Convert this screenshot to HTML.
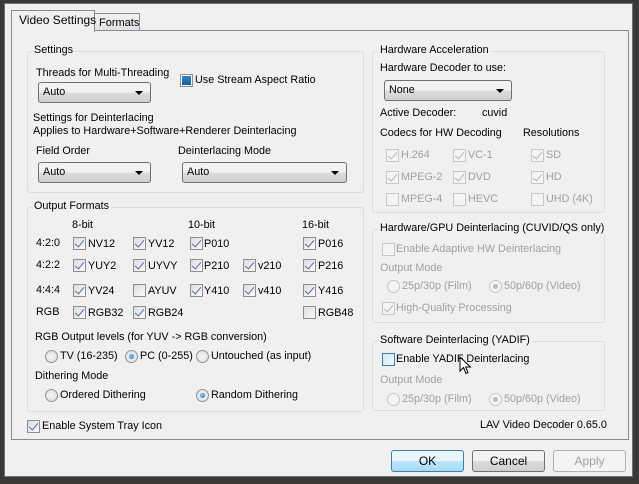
<!DOCTYPE html>
<html><head><meta charset="utf-8"><style>
*{margin:0;padding:0;box-sizing:border-box}
body{width:639px;height:484px;overflow:hidden;background:#3a3836;font-family:"Liberation Sans",sans-serif;font-size:10.8px;color:#000;position:relative}
.a{position:absolute;white-space:nowrap;line-height:13px}
.win{position:absolute;left:4px;top:3px;width:629px;height:474px;background:#f0f0f0;border:1px solid #6f6f6f}
.page{position:absolute;left:11px;top:30px;width:618px;height:410px;background:#f0f0f0;border:1px solid #898c95}
.gb{position:absolute;border:1px solid #d5dfe5;border-radius:3px}
.cap{position:absolute;background:#f0f0f0;padding:0 2px;line-height:13px;white-space:nowrap}
.cb{position:absolute;width:13px;height:13px;border:1px solid #8f8f8f;background:linear-gradient(135deg,#dcdcdc,#fbfbfb)}
.cb.on::after{content:"";position:absolute;left:3px;top:0px;width:4px;height:8px;border:solid #4d6cb0;border-width:0 1.6px 1.6px 0;transform:rotate(40deg)}
.cb.dis{border-color:#c8c8c8;background:#f4f4f4}
.cb.dis.on::after{border-color:#b5b5b5}
.rb{position:absolute;width:13px;height:13px;border:1px solid #949494;border-radius:50%;background:radial-gradient(circle,#f6f6f6,#dadada)}
.rb.on::after{content:"";position:absolute;left:3px;top:3px;width:5px;height:5px;border-radius:50%;background:radial-gradient(circle at 40% 40%,#8ad3ff,#1a5f9c)}
.rb.dis{border-color:#c6c6c6;background:#f4f4f4}
.rb.dis.on::after{background:#bcbcbc}
.g{color:#a0a0a0}
.combo{position:absolute;height:21px;border:1px solid #707070;border-radius:3px;background:linear-gradient(#f2f2f2 50%,#dddddd 50%,#cfcfcf);padding:3px 0 0 4px;line-height:13px}
.combo::after{content:"";position:absolute;right:7px;top:8px;border:4px solid transparent;border-top:4px solid #000;border-bottom:0}
.btn{position:absolute;height:22px;width:73px;border:1px solid #707070;border-radius:3px;background:linear-gradient(#f2f2f2 50%,#dcdcdc 50%,#cfcfcf);text-align:center;line-height:20px;font-size:12px}
</style></head><body>
<div class="win"></div>
<div class="a" style="left:94px;top:13px;width:46px;height:18px;border:1px solid #898c95;border-bottom:0;background:linear-gradient(#f4f4f4,#e0e0e0);padding:3px 0 0 4px;font-size:11px">Formats</div>
<div class="page"></div>
<div class="a" style="left:11px;top:10px;width:84px;height:22px;border:1px solid #898c95;border-bottom:0;background:#f0f0f0;padding:3px 0 0 7px;font-size:12px">Video Settings</div>

<div class="gb" style="left:27px;top:51px;width:337px;height:142px"></div>
<div class="cap" style="left:32px;top:44px">Settings</div>
<div class="a" style="left:36px;top:67px">Threads for Multi-Threading</div>
<div class="combo" style="left:38px;top:82px;width:113px">Auto</div>
<div class="cb" style="left:180px;top:74px;background:#fff"><div style="position:absolute;left:1px;top:1px;width:9px;height:9px;background:linear-gradient(#2a8ad2,#1a5fa6)"></div></div>
<div class="a" style="left:195px;top:74px">Use Stream Aspect Ratio</div>
<div class="a" style="left:33px;top:112px">Settings for Deinterlacing</div>
<div class="a" style="left:33px;top:125px">Applies to Hardware+Software+Renderer Deinterlacing</div>
<div class="a" style="left:36px;top:145px">Field Order</div>
<div class="a" style="left:178px;top:145px">Deinterlacing Mode</div>
<div class="combo" style="left:38px;top:162px;width:113px">Auto</div>
<div class="combo" style="left:182px;top:162px;width:165px">Auto</div>

<div class="gb" style="left:27px;top:207px;width:337px;height:205px"></div>
<div class="cap" style="left:32px;top:200px">Output Formats</div>
<div class="a" style="left:72px;top:219px">8-bit</div>
<div class="a" style="left:188px;top:219px">10-bit</div>
<div class="a" style="left:302px;top:219px">16-bit</div>

<div class="a" style="left:36px;top:237px">4:2:0</div>
<div class="cb on" style="left:73px;top:237px"></div><div class="a" style="left:88px;top:238px">NV12</div>
<div class="cb on" style="left:133px;top:237px"></div><div class="a" style="left:148px;top:238px">YV12</div>
<div class="cb on" style="left:190px;top:237px"></div><div class="a" style="left:204px;top:238px">P010</div>
<div class="cb on" style="left:303px;top:237px"></div><div class="a" style="left:318px;top:238px">P016</div>

<div class="a" style="left:36px;top:259px">4:2:2</div>
<div class="cb on" style="left:73px;top:259px"></div><div class="a" style="left:88px;top:260px">YUY2</div>
<div class="cb on" style="left:133px;top:259px"></div><div class="a" style="left:148px;top:260px">UYVY</div>
<div class="cb on" style="left:190px;top:259px"></div><div class="a" style="left:204px;top:260px">P210</div>
<div class="cb on" style="left:243px;top:259px"></div><div class="a" style="left:258px;top:260px">v210</div>
<div class="cb on" style="left:303px;top:259px"></div><div class="a" style="left:318px;top:260px">P216</div>

<div class="a" style="left:36px;top:284px">4:4:4</div>
<div class="cb on" style="left:73px;top:284px"></div><div class="a" style="left:88px;top:285px">YV24</div>
<div class="cb" style="left:133px;top:284px"></div><div class="a" style="left:148px;top:285px">AYUV</div>
<div class="cb on" style="left:190px;top:284px"></div><div class="a" style="left:204px;top:285px">Y410</div>
<div class="cb on" style="left:243px;top:284px"></div><div class="a" style="left:258px;top:285px">v410</div>
<div class="cb on" style="left:303px;top:284px"></div><div class="a" style="left:318px;top:285px">Y416</div>

<div class="a" style="left:36px;top:306px">RGB</div>
<div class="cb on" style="left:73px;top:306px"></div><div class="a" style="left:88px;top:307px">RGB32</div>
<div class="cb on" style="left:133px;top:306px"></div><div class="a" style="left:148px;top:307px">RGB24</div>
<div class="cb" style="left:303px;top:306px"></div><div class="a" style="left:318px;top:307px">RGB48</div>

<div class="a" style="left:35px;top:331px">RGB Output levels (for YUV -&gt; RGB conversion)</div>
<div class="rb" style="left:45px;top:350px"></div><div class="a" style="left:60px;top:350px">TV (16-235)</div>
<div class="rb on" style="left:125px;top:350px"></div><div class="a" style="left:140px;top:350px">PC (0-255)</div>
<div class="rb" style="left:196px;top:350px"></div><div class="a" style="left:211px;top:350px">Untouched (as input)</div>
<div class="a" style="left:35px;top:370px">Dithering Mode</div>
<div class="rb" style="left:45px;top:389px"></div><div class="a" style="left:60px;top:389px">Ordered Dithering</div>
<div class="rb on" style="left:196px;top:389px"></div><div class="a" style="left:211px;top:389px">Random Dithering</div>

<div class="cb on" style="left:27px;top:420px"></div><div class="a" style="left:42px;top:420px">Enable System Tray Icon</div>

<div class="gb" style="left:372px;top:51px;width:233px;height:162px"></div>
<div class="cap" style="left:378px;top:44px">Hardware Acceleration</div>
<div class="a" style="left:380px;top:62px">Hardware Decoder to use:</div>
<div class="combo" style="left:384px;top:80px;width:128px">None</div>
<div class="a" style="left:380px;top:107px">Active Decoder:</div>
<div class="a" style="left:482px;top:107px">cuvid</div>
<div class="a" style="left:380px;top:127px">Codecs for HW Decoding</div>
<div class="a" style="left:523px;top:127px">Resolutions</div>
<div class="cb dis on" style="left:386px;top:149px"></div><div class="a g" style="left:401px;top:149px">H.264</div>
<div class="cb dis on" style="left:453px;top:149px"></div><div class="a g" style="left:468px;top:149px">VC-1</div>
<div class="cb dis on" style="left:531px;top:149px"></div><div class="a g" style="left:546px;top:149px">SD</div>
<div class="cb dis on" style="left:386px;top:171px"></div><div class="a g" style="left:401px;top:171px">MPEG-2</div>
<div class="cb dis on" style="left:453px;top:171px"></div><div class="a g" style="left:468px;top:171px">DVD</div>
<div class="cb dis on" style="left:531px;top:171px"></div><div class="a g" style="left:546px;top:171px">HD</div>
<div class="cb dis" style="left:386px;top:193px"></div><div class="a g" style="left:401px;top:193px">MPEG-4</div>
<div class="cb dis" style="left:453px;top:193px"></div><div class="a g" style="left:468px;top:193px">HEVC</div>
<div class="cb dis" style="left:531px;top:193px"></div><div class="a g" style="left:546px;top:193px">UHD (4K)</div>

<div class="gb" style="left:372px;top:229px;width:233px;height:94px"></div>
<div class="cap" style="left:378px;top:222px">Hardware/GPU Deinterlacing (CUVID/QS only)</div>
<div class="cb dis" style="left:382px;top:243px"></div><div class="a g" style="left:396px;top:243px">Enable Adaptive HW Deinterlacing</div>
<div class="a g" style="left:380px;top:262px">Output Mode</div>
<div class="rb dis" style="left:387px;top:280px"></div><div class="a g" style="left:402px;top:280px">25p/30p (Film)</div>
<div class="rb dis on" style="left:489px;top:280px"></div><div class="a g" style="left:504px;top:280px">50p/60p (Video)</div>
<div class="cb dis on" style="left:382px;top:302px"></div><div class="a g" style="left:396px;top:302px">High-Quality Processing</div>

<div class="gb" style="left:372px;top:341px;width:233px;height:70px"></div>
<div class="cap" style="left:378px;top:334px">Software Deinterlacing (YADIF)</div>
<div class="cb" style="left:382px;top:353px;border-color:#3c7fb1;background:linear-gradient(135deg,#cde9f8,#f2faff)"></div><div class="a" style="left:396px;top:353px">Enable YADIF Deinterlacing</div>
<div class="a g" style="left:380px;top:374px">Output Mode</div>
<div class="rb dis" style="left:387px;top:393px"></div><div class="a g" style="left:402px;top:393px">25p/30p (Film)</div>
<div class="rb dis on" style="left:489px;top:393px"></div><div class="a g" style="left:504px;top:393px">50p/60p (Video)</div>
<svg style="position:absolute;left:459px;top:356px" width="14" height="20" viewBox="0 0 14 20"><path d="M1 1 L1 15 L4.5 11.5 L7 17.5 L9 16.6 L6.6 11 L11.5 11 Z" fill="#fff" stroke="#000" stroke-width="1"/></svg>

<div class="a" style="left:480px;top:419px">LAV Video Decoder 0.65.0</div>

<div class="btn" style="left:391px;top:450px;border-color:#3c7fb1;background:linear-gradient(#eaf6fd 50%,#bee6fd 50%,#a7d9f5)">OK</div>
<div class="btn" style="left:472px;top:450px">Cancel</div>
<div class="btn" style="left:553px;top:450px;border-color:#adb2b5;background:#f4f4f4;color:#a0a0a0">Apply</div>
</body></html>
